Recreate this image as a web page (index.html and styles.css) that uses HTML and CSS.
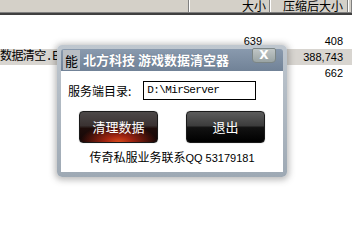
FILE: index.html
```html
<!DOCTYPE html>
<html>
<head>
<meta charset="utf-8">
<link rel="stylesheet" href="styles.css">
</head>
<body>
<div class="list">
  <div class="header">
    <div class="hc c1"></div>
    <div class="hc c2">大小</div>
    <div class="hc c3">压缩后大小</div>
    <div class="hc c4"></div>
  </div>
  <div class="rows">
    <div class="row">
      <div class="cell c1"></div>
      <div class="cell c2 num">639</div>
      <div class="cell c3 num">408</div>
    </div>
    <div class="row sel">
      <div class="cell c1 name">数据清空.EXE</div>
      <div class="cell c2 num">395,751</div>
      <div class="cell c3 num">388,743</div>
    </div>
    <div class="row">
      <div class="cell c1"></div>
      <div class="cell c2 num">1,051</div>
      <div class="cell c3 num">662</div>
    </div>
  </div>
</div>

<div class="dialog">
  <div class="titlebar">
    <span class="appicon">能</span>
    <span class="title">北方科技 游戏数据清空器</span>
    <span class="close">X</span>
  </div>
  <div class="body">
    <div class="field">
      <span class="label">服务端目录:</span>
      <div class="input">D:\MirServer</div>
    </div>
    <div class="buttons">
      <div class="btn btn-red">清理数据</div>
      <div class="btn btn-black">退出</div>
    </div>
    <div class="footer">传奇私服业务联系<span class="latin">QQ 53179181</span></div>
  </div>
</div>
</body>
</html>
```
FILE: styles.css
```css
html, body {
  margin: 0;
  padding: 0;
  background: #ffffff;
  width: 352px;
  height: 243px;
  overflow: hidden;
  font-family: "Noto Sans CJK SC", sans-serif;
  font-size: 12px;
  color: #000;
}

.list {
  width: 352px;
}

.header {
  display: flex;
  height: 15px;
  box-sizing: border-box;
  background: #d4d0c8;
  border-bottom: 2px solid #404040;
}

.hc {
  box-sizing: border-box;
  height: 13px;
  line-height: 12px;
  text-align: right;
  border-right: 1px solid #808080;
  border-bottom: 1px solid #808080;
  box-shadow: 1px 0 #ffffff;
  white-space: nowrap;
}

.c1 { width: 189px; flex: none; }
.c2 { width: 81px; flex: none; padding-right: 3px; box-sizing: border-box; }
.c3 { width: 78px; flex: none; padding-right: 4px; box-sizing: border-box; }
.c4 { flex: 1; }

.rows {
  padding-top: 18px;
}

.row {
  display: flex;
  height: 16px;
  line-height: 16px;
}

.row.sel {
  background: #d8d5d0;
}

.cell {
  box-sizing: border-box;
  white-space: nowrap;
  overflow: hidden;
}

.cell.c2 { padding-right: 8px; text-align: right; }
.cell.c3 { padding-right: 5px; text-align: right; }

.num {
  font-family: "Liberation Sans", sans-serif;
  font-size: 11px;
}

.name {
  font-family: "Liberation Mono", "Noto Sans CJK SC", monospace;
  font-size: 12px;
  letter-spacing: -0.6px;
}

.dialog {
  position: absolute;
  left: 57px;
  top: 45px;
  width: 230px;
  height: 132px;
  box-sizing: border-box;
  padding: 4px 4px 5px 4px;
  border-radius: 5px;
  background: linear-gradient(#bfc7cf, #9ea9b4);
  box-shadow: 0 1px 6px 2px rgba(60, 60, 60, 0.35);
}

.titlebar {
  display: flex;
  align-items: center;
  height: 22px;
  background: linear-gradient(rgba(128, 146, 168, 0.85), rgba(100, 119, 142, 0.85));
  border-radius: 3px 3px 0 0;
}

.appicon {
  width: 17px;
  height: 20px;
  margin-left: 2px;
  background: #b9bec4;
  color: #000;
  font-size: 13px;
  line-height: 22px;
  text-align: center;
  flex: none;
}

.title {
  margin-left: 3px;
  color: #ffffff;
  font-weight: bold;
  font-size: 13px;
  line-height: 16px;
  white-space: nowrap;
  text-shadow: 0 0 1px rgba(60, 70, 90, 0.6);
}

.close {
  margin-left: auto;
  margin-right: 7px;
  align-self: flex-start;
  margin-top: -1px;
  width: 24px;
  height: 15px;
  box-sizing: border-box;
  border: 1px solid #7c8686;
  border-radius: 2px 2px 4px 4px;
  background: linear-gradient(#c0c6c6, #9aa4a4);
  color: #ffffff;
  font-family: "DejaVu Sans", sans-serif;
  font-weight: bold;
  font-size: 12px;
  line-height: 13px;
  text-align: center;
}

.body {
  height: 101px;
  background: #ffffff;
  box-sizing: border-box;
  padding-top: 10px;
}

.field {
  display: flex;
  align-items: center;
  gap: 12px;
  padding-left: 7px;
}

.label {
  font-size: 12px;
  line-height: 19px;
}

.input {
  width: 113px;
  height: 19px;
  box-sizing: border-box;
  border: 1px solid #000;
  padding-left: 3px;
  font-family: "Liberation Mono", monospace;
  font-size: 11px;
  letter-spacing: -0.6px;
  line-height: 17px;
}

.buttons {
  display: flex;
  justify-content: center;
  gap: 28px;
  margin-top: 11px;
}

.btn {
  width: 79px;
  height: 32px;
  box-sizing: border-box;
  border: 1px solid #1a1a1a;
  border-radius: 4px;
  color: #ffffff;
  font-size: 13px;
  line-height: 30px;
  text-align: center;
  box-shadow: 0 0 1px rgba(0, 0, 0, 0.4);
}

.btn-red {
  background:
    radial-gradient(ellipse 50% 60% at 50% 100%, #d84a1c 0%, #a02410 35%, rgba(60, 10, 6, 0) 100%),
    linear-gradient(#4c4848, #3a3232 45%, #1e0c0a 55%, #140606);
}

.btn-black {
  background: linear-gradient(#5c5c5c, #3c3c3c 45%, #121212 52%, #000000);
}

.footer {
  margin-top: 7px;
  text-align: center;
  font-size: 12px;
  line-height: 14px;
}

.latin {
  font-family: "Liberation Sans", sans-serif;
  font-size: 11px;
}
```
